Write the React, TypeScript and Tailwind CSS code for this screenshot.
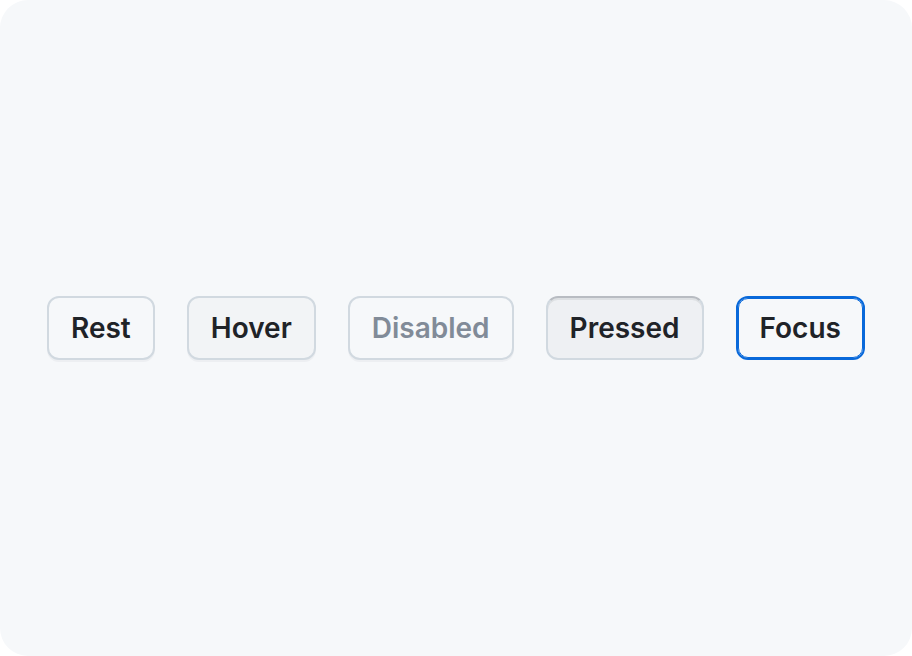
const base =
  "h-16 px-[22px] rounded-xl border-2 text-[28px] font-semibold leading-none flex items-center justify-center";

export default function App() {
  return (
    <div className="w-[912px] h-[656px] bg-white">
      <div
        className="w-full h-full rounded-[28px] bg-[#f6f8fa] flex items-center justify-center gap-8"
        style={{ fontFamily: "Inter, 'Noto Sans', sans-serif" }}
      >
        <button className={`${base} bg-[#f6f8fa] border-[#d1d9e0] text-[#1f2328] shadow-[0_2px_0_0_rgba(31,35,40,0.04)]`}>
          Rest
        </button>
        <button className={`${base} bg-[#f2f4f6] border-[#d1d9e0] text-[#1f2328] shadow-[0_2px_0_0_rgba(31,35,40,0.04)]`}>
          Hover
        </button>
        <button className={`${base} bg-[#f6f8fa] border-[#d1d9e0] text-[#818b98] shadow-[0_2px_0_0_rgba(31,35,40,0.04)]`}>
          Disabled
        </button>
        <button className={`${base} bg-[#eef0f3] border-[#d1d9e0] border-t-[#b8bcc2] text-[#1f2328] shadow-[inset_0_2px_0_0_rgba(31,35,40,0.08)]`}>
          Pressed
        </button>
        <button className={`${base} bg-[#f6f8fa] border-[#0969da] text-[#1f2328] outline-[1.5px] outline-[#0969da] -outline-offset-[3px]`}>
          Focus
        </button>
      </div>
    </div>
  );
}
